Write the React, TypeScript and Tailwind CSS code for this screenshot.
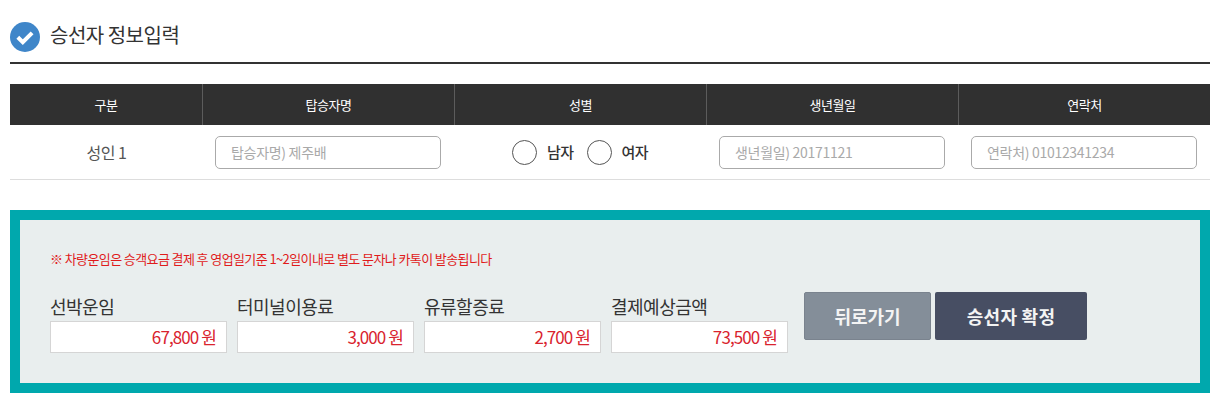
import React from 'react';

const font = { fontFamily: '"Noto Sans CJK KR", "Noto Sans", sans-serif' };

const headers = ['구분', '탑승자명', '성별', '생년월일', '연락처'];

const fares = [
  { label: '선박운임', value: '67,800 원' },
  { label: '터미널이용료', value: '3,000 원' },
  { label: '유류할증료', value: '2,700 원' },
  { label: '결제예상금액', value: '73,500 원' },
];

const TextField = ({ placeholder }: { placeholder: string }) => (
  <input
    type="text"
    placeholder={placeholder}
    className="w-[226px] h-[33px] px-[15px] rounded-[5px] border border-[#aaaaaa] bg-white text-[14px] tracking-[-0.3px] placeholder:text-[#a9a9a9] outline-none"
  />
);

const Radio = ({ label }: { label: string }) => (
  <label className="flex items-center gap-[10px] text-[15px] font-medium tracking-[-0.5px] text-[#333333]">
    <input type="radio" name="gender" className="appearance-none w-[25px] h-[25px] rounded-full border border-[#555555] bg-white" />
    {label}
  </label>
);

export default function App() {
  return (
    <div className="w-[1231px] h-[402px] overflow-hidden bg-white pl-[10px] pt-[22px]" style={font}>
      <div className="w-[1200px]">
        <div className="flex items-start gap-[10px] pb-[10px] border-b-2 border-[#333333]">
          <svg width="30" height="30" viewBox="0 0 30 30">
            <circle cx="15" cy="15" r="15" fill="#3f86c9" />
            <path d="M7.8 15.2l5 4.9 9.3-9.3" fill="none" stroke="#ffffff" strokeWidth="4" />
          </svg>
          <h2 className="text-[20px] leading-[26px] tracking-[-0.5px] text-[#333333]">승선자 정보입력</h2>
        </div>

        <div className="mt-[20px] grid grid-cols-[193px_252px_252px_252px_251px] h-[41px] bg-[#303030]">
          {headers.map((h, i) => (
            <div
              key={h}
              className={`flex items-center justify-center text-[13px] tracking-[-0.5px] text-white ${i < 4 ? 'border-r border-[#5c5c5c]' : ''}`}
            >
              {h}
            </div>
          ))}
        </div>

        <div className="grid grid-cols-[193px_252px_252px_252px_251px] h-[55px] border-b border-[#dddddd] items-center">
          <div className="text-center text-[16px] tracking-[-0.5px] text-[#555555]">성인 1</div>
          <div className="pl-[12px]">
            <TextField placeholder="탑승자명) 제주배" />
          </div>
          <div className="flex justify-center gap-[13px] pr-[2px]">
            <Radio label="남자" />
            <Radio label="여자" />
          </div>
          <div className="pl-[12px]">
            <TextField placeholder="생년월일) 20171121" />
          </div>
          <div className="pl-[12px]">
            <TextField placeholder="연락처) 01012341234" />
          </div>
        </div>

        <div className="mt-[30px] h-[183px] border-[10px] border-[#00a8ad] bg-[#e9eeee] pl-[30px] pt-[29px]">
          <p className="text-[13px] leading-[20px] tracking-[-0.6px] text-[#e01b1b]">
            ※ 차량운임은 승객요금 결제 후 영업일기준 1~2일이내로 별도 문자나 카톡이 발송됩니다
          </p>
          <div className="mt-[23px] flex items-start">
            <div className="flex gap-[10px]">
              {fares.map((f) => (
                <div key={f.label} className="w-[177px]">
                  <div className="h-[29px] text-[18px] leading-[28px] tracking-[-0.5px] text-[#333333]">{f.label}</div>
                  <div className="h-[32px] bg-white border border-[#d5d5d5] pr-[10px] text-right text-[17px] leading-[30px] tracking-[-0.9px] text-[#d9232e]">
                    {f.value}
                  </div>
                </div>
              ))}
            </div>
            <div className="ml-[16px] flex gap-[4px]">
              <button className="w-[127px] h-[48px] rounded-[2px] border border-[#7a838e] bg-[#848e99] text-[18px] font-bold text-[#f4f4f4]">
                뒤로가기
              </button>
              <button className="w-[152px] h-[48px] rounded-[2px] bg-[#474e63] text-[18px] font-bold tracking-[0.3px] text-[#f4f4f4]">
                승선자 확정
              </button>
            </div>
          </div>
        </div>
      </div>
    </div>
  );
}
